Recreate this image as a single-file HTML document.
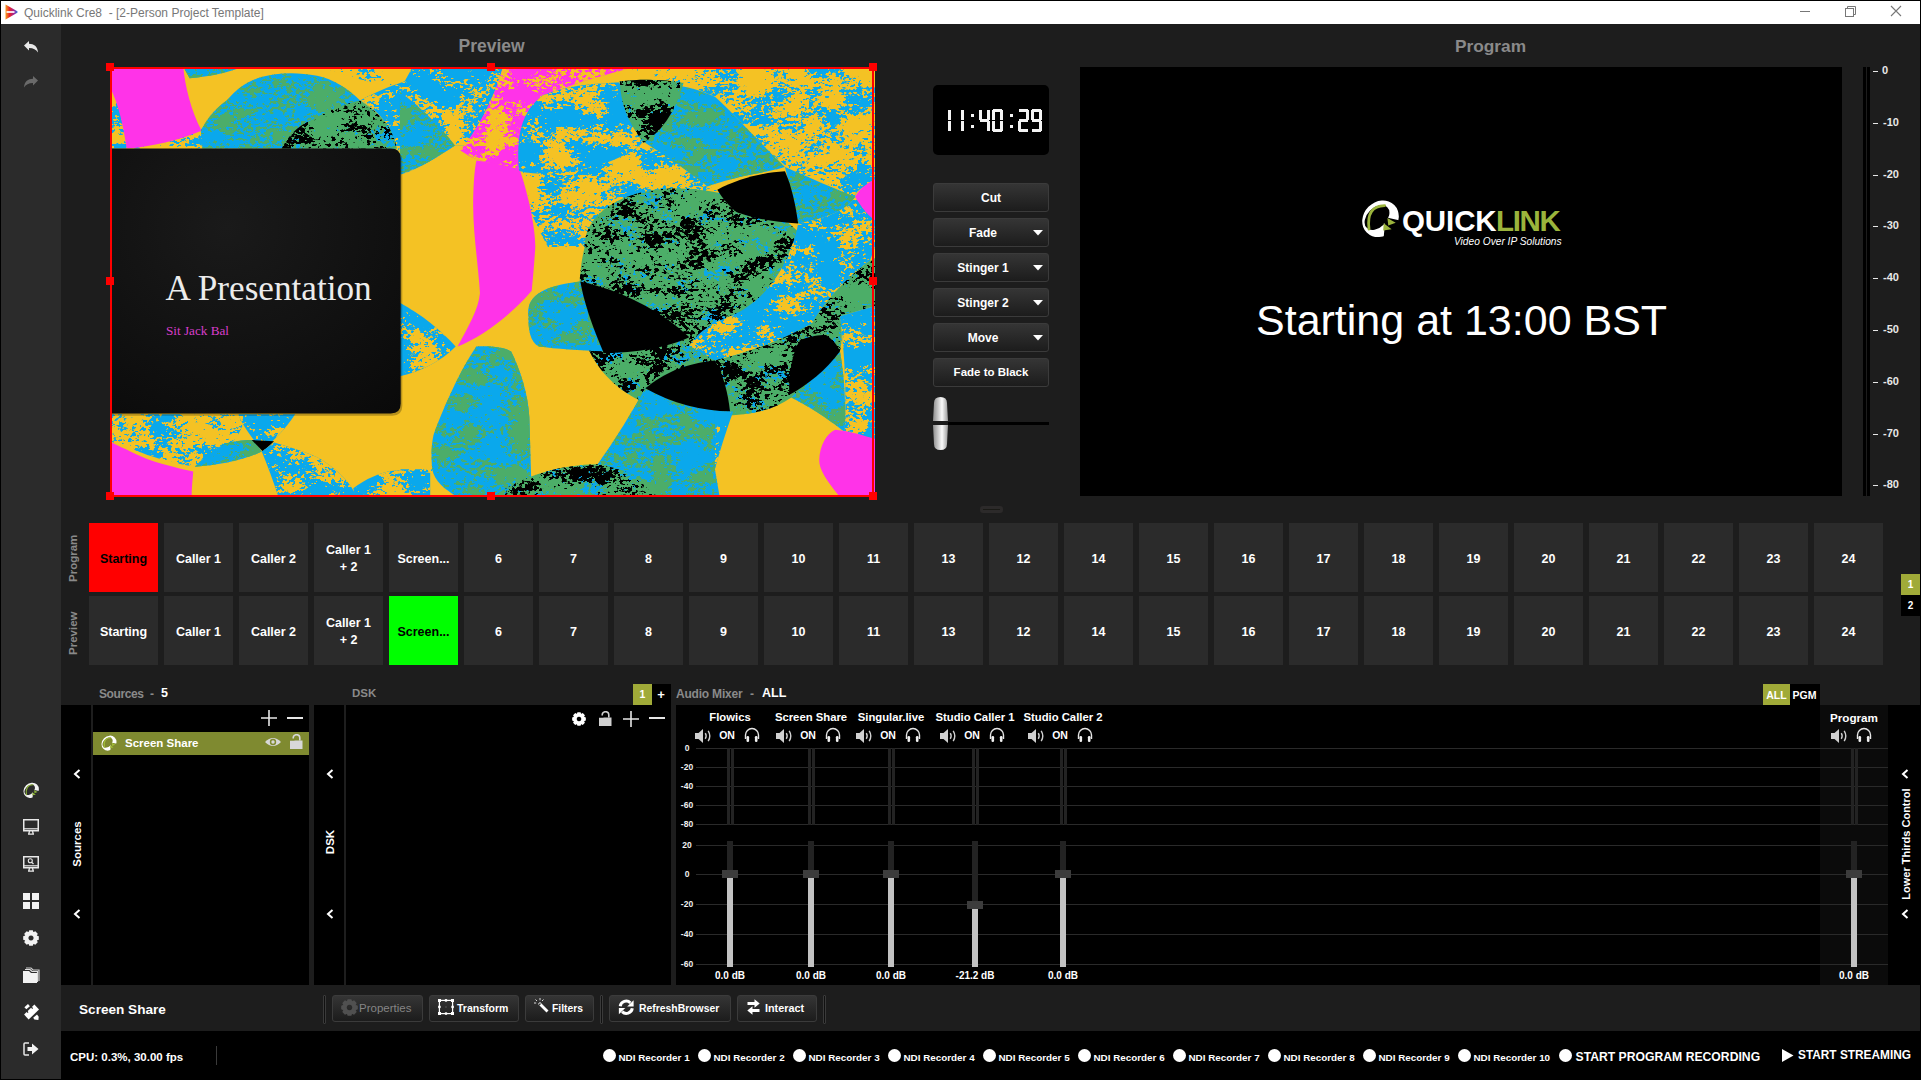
<!DOCTYPE html><html><head><meta charset="utf-8"><style>
html,body{margin:0;padding:0;width:1921px;height:1080px;overflow:hidden;background:#1d1d1d;font-family:"Liberation Sans", sans-serif;}
div{box-sizing:border-box;}
.btn{position:absolute;border:1px solid #3b3b3b;border-radius:3px;background:linear-gradient(#353535,#1c1c1c);}
.gb{position:absolute;width:69px;height:69px;padding-top:3px;background:#2b2b2b;display:flex;align-items:center;justify-content:center;text-align:center;color:#fff;font-weight:700;font-size:12.5px;line-height:17px;}
</style></head><body>
<div style="position:absolute;left:0px;top:0px;width:1921px;height:24px;background:#fff;border-top:1px solid #000;border-left:1px solid #000;border-right:1px solid #000;"></div>
<svg style="position:absolute;left:4px;top:4px" width="14" height="16" viewBox="0 0 14 16">
<defs><linearGradient id="tg" x1="0" x2="1" y1="0" y2="0"><stop offset="0" stop-color="#f7a21b"/><stop offset="0.35" stop-color="#e8222b"/><stop offset="0.7" stop-color="#a0239a"/><stop offset="1" stop-color="#2a7be0"/></linearGradient></defs>
<path d="M1.5 1 Q1 0.3 2 0.8 L13.3 7.3 Q14 8 13.3 8.7 L2 15.2 Q1 15.7 1.5 15 Z" fill="url(#tg)"/>
<rect x="2.5" y="7" width="8" height="2" fill="#fff" opacity="0.85"/></svg>
<div style="position:absolute;left:24px;top:7px;font-size:12px;color:#777;font-weight:400;white-space:nowrap;line-height:1;">Quicklink Cre8&nbsp; - [2-Person Project Template]</div>
<div style="position:absolute;left:1800px;top:11px;width:10px;height:1px;background:#777;"></div>
<svg style="position:absolute;left:1844px;top:5px" width="13" height="13" viewBox="0 0 13 13" fill="none" stroke="#777" stroke-width="1">
<rect x="1.5" y="3.5" width="8" height="8"/><path d="M3.5 3.5 V1.5 H11.5 V9.5 H9.5"/></svg>
<svg style="position:absolute;left:1890px;top:5px" width="12" height="12" viewBox="0 0 12 12" stroke="#777" stroke-width="1.1">
<path d="M1 1 L11 11 M11 1 L1 11"/></svg>
<div style="position:absolute;left:0px;top:24px;width:61px;height:1056px;background:#2b2b2b;"></div>
<svg style="position:absolute;left:23px;top:40px" width="16" height="14" viewBox="0 0 16 14">
<path d="M1 5.5 L6 1 V3.8 C11 3.8 14.5 6.5 15 12.5 C13 9.5 10.5 8 6 8 V10.5 Z" fill="#e8e8e8"/></svg>
<svg style="position:absolute;left:23px;top:75px" width="16" height="14" viewBox="0 0 16 14">
<path d="M15 5.5 L10 1 V3.8 C5 3.8 1.5 6.5 1 12.5 C3 9.5 5.5 8 10 8 V10.5 Z" fill="#6a6a6a"/></svg>
<div style="position:absolute;left:458.5px;top:38px;font-size:17.5px;color:#8a8a8a;font-weight:700;white-space:nowrap;line-height:1;">Preview</div>
<div style="position:absolute;left:1455px;top:38px;font-size:17.3px;color:#8a8a8a;font-weight:700;white-space:nowrap;line-height:1;">Program</div>
<div style="position:absolute;left:110px;top:67px;width:764px;height:430px;background:#f4c224;"></div>
<svg style="position:absolute;left:110px;top:67px" width="765" height="430" viewBox="0 0 1921 1080" preserveAspectRatio="none"><defs><filter id="fg" x="0" y="0" width="1" height="1" color-interpolation-filters="sRGB"><feTurbulence type="fractalNoise" baseFrequency="0.012 0.02" numOctaves="2" seed="11"/><feColorMatrix type="matrix" values="1 0 0 0 0  1 0 0 0 0  1 0 0 0 0  0 0 0 0 1" result="lo"/><feTurbulence type="fractalNoise" baseFrequency="0.09 0.14" numOctaves="4" seed="12"/><feColorMatrix type="matrix" values="1 0 0 0 0  1 0 0 0 0  1 0 0 0 0  0 0 0 0 1" result="hi"/><feComposite in="lo" in2="hi" operator="arithmetic" k1="0" k2="1.2" k3="1" k4="-0.6"/><feColorMatrix type="matrix" values="0 0 0 0 0.3  0 0 0 0 0.68  0 0 0 0 0.41  -16 0 0 0 8.2"/><feComposite in2="SourceAlpha" operator="in"/></filter><filter id="fk" x="0" y="0" width="1" height="1" color-interpolation-filters="sRGB"><feTurbulence type="fractalNoise" baseFrequency="0.012 0.02" numOctaves="2" seed="21"/><feColorMatrix type="matrix" values="1 0 0 0 0  1 0 0 0 0  1 0 0 0 0  0 0 0 0 1" result="lo"/><feTurbulence type="fractalNoise" baseFrequency="0.09 0.14" numOctaves="4" seed="22"/><feColorMatrix type="matrix" values="1 0 0 0 0  1 0 0 0 0  1 0 0 0 0  0 0 0 0 1" result="hi"/><feComposite in="lo" in2="hi" operator="arithmetic" k1="0" k2="1.2" k3="1" k4="-0.6"/><feColorMatrix type="matrix" values="0 0 0 0 0  0 0 0 0 0  0 0 0 0 0  -16 0 0 0 6.9"/><feComposite in2="SourceAlpha" operator="in"/></filter><filter id="fkb" x="0" y="0" width="1" height="1" color-interpolation-filters="sRGB"><feTurbulence type="fractalNoise" baseFrequency="0.012 0.02" numOctaves="2" seed="31"/><feColorMatrix type="matrix" values="1 0 0 0 0  1 0 0 0 0  1 0 0 0 0  0 0 0 0 1" result="lo"/><feTurbulence type="fractalNoise" baseFrequency="0.09 0.14" numOctaves="4" seed="32"/><feColorMatrix type="matrix" values="1 0 0 0 0  1 0 0 0 0  1 0 0 0 0  0 0 0 0 1" result="hi"/><feComposite in="lo" in2="hi" operator="arithmetic" k1="0" k2="1.2" k3="1" k4="-0.6"/><feColorMatrix type="matrix" values="0 0 0 0 0.04  0 0 0 0 0.66  0 0 0 0 0.92  -16 0 0 0 4.6"/><feComposite in2="SourceAlpha" operator="in"/></filter><filter id="fy" x="0" y="0" width="1" height="1" color-interpolation-filters="sRGB"><feTurbulence type="fractalNoise" baseFrequency="0.012 0.02" numOctaves="2" seed="41"/><feColorMatrix type="matrix" values="1 0 0 0 0  1 0 0 0 0  1 0 0 0 0  0 0 0 0 1" result="lo"/><feTurbulence type="fractalNoise" baseFrequency="0.09 0.14" numOctaves="4" seed="42"/><feColorMatrix type="matrix" values="1 0 0 0 0  1 0 0 0 0  1 0 0 0 0  0 0 0 0 1" result="hi"/><feComposite in="lo" in2="hi" operator="arithmetic" k1="0" k2="1.2" k3="1" k4="-0.6"/><feColorMatrix type="matrix" values="0 0 0 0 0.96  0 0 0 0 0.76  0 0 0 0 0.14  -16 0 0 0 6.9"/><feComposite in2="SourceAlpha" operator="in"/></filter><filter id="fb" x="0" y="0" width="1" height="1" color-interpolation-filters="sRGB"><feTurbulence type="fractalNoise" baseFrequency="0.012 0.02" numOctaves="2" seed="51"/><feColorMatrix type="matrix" values="1 0 0 0 0  1 0 0 0 0  1 0 0 0 0  0 0 0 0 1" result="lo"/><feTurbulence type="fractalNoise" baseFrequency="0.09 0.14" numOctaves="4" seed="52"/><feColorMatrix type="matrix" values="1 0 0 0 0  1 0 0 0 0  1 0 0 0 0  0 0 0 0 1" result="hi"/><feComposite in="lo" in2="hi" operator="arithmetic" k1="0" k2="1.2" k3="1" k4="-0.6"/><feColorMatrix type="matrix" values="0 0 0 0 0.04  0 0 0 0 0.66  0 0 0 0 0.92  -16 0 0 0 7.3"/><feComposite in2="SourceAlpha" operator="in"/></filter><filter id="fY" x="0" y="0" width="1" height="1" color-interpolation-filters="sRGB"><feTurbulence type="fractalNoise" baseFrequency="0.012 0.02" numOctaves="2" seed="61"/><feColorMatrix type="matrix" values="1 0 0 0 0  1 0 0 0 0  1 0 0 0 0  0 0 0 0 1" result="lo"/><feTurbulence type="fractalNoise" baseFrequency="0.09 0.14" numOctaves="4" seed="62"/><feColorMatrix type="matrix" values="1 0 0 0 0  1 0 0 0 0  1 0 0 0 0  0 0 0 0 1" result="hi"/><feComposite in="lo" in2="hi" operator="arithmetic" k1="0" k2="1.2" k3="1" k4="-0.6"/><feColorMatrix type="matrix" values="0 0 0 0 0.96  0 0 0 0 0.76  0 0 0 0 0.14  -16 0 0 0 7.8"/><feComposite in2="SourceAlpha" operator="in"/></filter><radialGradient id="pg" cx="0.4" cy="0.3" r="0.9"><stop offset="0" stop-color="#1a1a1a"/><stop offset="1" stop-color="#0a0a0a"/></radialGradient></defs><rect x="0" y="0" width="1921" height="1080" fill="#f4c224"/><path d="M1280,0 L1921,0 L1921,290 C1880,300 1870,320 1871,326 C1800,300 1740,280 1695,251 C1620,180 1560,110 1519,75 C1450,40 1350,20 1280,0 Z" fill="#f4c224"/><path d="M1280,0 L1921,0 L1921,290 C1880,300 1870,320 1871,326 C1800,300 1740,280 1695,251 C1620,180 1560,110 1519,75 C1450,40 1350,20 1280,0 Z" fill="#000" filter="url(#fb)"/><path d="M1029,260 C1100,230 1200,200 1300,197 C1400,200 1480,240 1523,300 L1531,452 L1100,452 C1060,380 1035,320 1029,260 Z" fill="#f4c224"/><path d="M1029,260 C1100,230 1200,200 1300,197 C1400,200 1480,240 1523,300 L1531,452 L1100,452 C1060,380 1035,320 1029,260 Z" fill="#000" filter="url(#fb)"/><path d="M536,0 L1000,0 L990,60 L740,60 C700,45 600,30 536,0 Z" fill="#f4c224"/><path d="M536,0 L1000,0 L990,60 L740,60 C700,45 600,30 536,0 Z" fill="#000" filter="url(#fb)"/><path d="M0,872 L340,872 C330,930 300,960 213,1004 C120,990 60,960 0,940 Z" fill="#f4c224"/><path d="M0,872 L340,872 C330,930 300,960 213,1004 C120,990 60,960 0,940 Z" fill="#000" filter="url(#fb)"/><path d="M0,54 L42,54 L42,205 L0,205 Z" fill="#f4c224"/><path d="M0,54 L42,54 L42,205 L0,205 Z" fill="#000" filter="url(#fb)"/><path d="M126,159 L240,159 L228,205 L60,205 Z" fill="#f4c224"/><path d="M126,159 L240,159 L228,205 L60,205 Z" fill="#000" filter="url(#fb)"/><path d="M728,1010 L809,1010 L815,1080 L728,1080 Z" fill="#f4c224"/><path d="M728,1010 L809,1010 L815,1080 L728,1080 Z" fill="#000" filter="url(#fb)"/><path d="M0,0 L184,0 C188,45 203,110 230,160 C175,183 105,200 42,205 C34,150 22,95 0,50 Z" fill="#ff33e8"/><path d="M184,0 L330,0 C300,14 250,24 200,28 Z" fill="#0aa8ec"/><path d="M184,0 L330,0 C300,14 250,24 200,28 Z" fill="#000" filter="url(#fg)"/><path d="M228,159 C250,120 270,100 293,84 C320,55 340,38 380,25 C420,14 470,12 520,22 C560,30 600,55 628,84 C680,120 710,170 720,205 L232,205 Z" fill="#0aa8ec"/><path d="M228,159 C250,120 270,100 293,84 C320,55 340,38 380,25 C420,14 470,12 520,22 C560,30 600,55 628,84 C680,120 710,170 720,205 L232,205 Z" fill="#000" filter="url(#fg)"/><path d="M628,84 C660,66 700,50 740,36 L760,0 L1000,0 C990,60 970,120 946,170 C920,190 890,200 866,197 C830,220 780,255 730,270 C728,240 725,220 720,205 C710,160 680,110 628,84 Z" fill="#0aa8ec"/><path d="M628,84 C660,66 700,50 740,36 L760,0 L1000,0 C990,60 970,120 946,170 C920,190 890,200 866,197 C830,220 780,255 730,270 C728,240 725,220 720,205 C710,160 680,110 628,84 Z" fill="#000" filter="url(#fy)"/><path d="M431,205 C450,170 470,150 502,135 C550,108 590,92 628,84 C660,105 690,130 705,160 C712,175 718,190 720,205 Z" fill="#4cae68"/><path d="M431,205 C450,170 470,150 502,135 C550,108 590,92 628,84 C660,105 690,130 705,160 C712,175 718,190 720,205 Z" fill="#000" filter="url(#fkb)"/><path d="M431,205 C450,170 470,150 502,135 C550,108 590,92 628,84 C660,105 690,130 705,160 C712,175 718,190 720,205 Z" fill="#000" filter="url(#fk)"/><path d="M728,63 C780,100 830,150 866,197 C830,220 780,255 728,268 Z" fill="#0aa8ec"/><path d="M728,63 C780,100 830,150 866,197 C830,220 780,255 728,268 Z" fill="#000" filter="url(#fg)"/><path d="M987,0 L1314,0 C1250,20 1150,40 1090,80 C1050,110 1035,150 1029,200 L1029,260 C990,250 940,240 904,225 L880,210 C920,160 960,90 987,0 Z" fill="#ff33e8"/><path d="M987,0 L1314,0 C1250,20 1150,40 1090,80 C1050,110 1035,150 1029,200 L1029,260 C990,250 940,240 904,225 L880,210 C920,160 960,90 987,0 Z" fill="#000" filter="url(#fY)"/><path d="M920,235 C960,240 1000,248 1029,258 C1050,320 1068,400 1068,452 C1065,500 1062,530 1059,562 C1000,630 930,680 873,702 C900,650 925,610 929,568 C925,500 912,420 912,350 C912,300 915,260 920,235 Z" fill="#ff33e8"/><path d="M1027,260 C1020,180 1030,110 1090,70 C1150,45 1220,40 1300,38 C1330,100 1340,160 1340,188 C1300,230 1200,262 1100,268 C1060,268 1035,265 1027,260 Z" fill="#0aa8ec"/><path d="M1027,260 C1020,180 1030,110 1090,70 C1150,45 1220,40 1300,38 C1330,100 1340,160 1340,188 C1300,230 1200,262 1100,268 C1060,268 1035,265 1027,260 Z" fill="#000" filter="url(#fy)"/><path d="M1356,42 C1420,40 1480,55 1519,75 C1560,110 1620,180 1695,251 C1680,256 1650,262 1620,268 C1560,280 1520,293 1500,300 C1450,260 1390,220 1340,188 C1350,140 1356,90 1356,42 Z" fill="#0aa8ec"/><path d="M1356,42 C1420,40 1480,55 1519,75 C1560,110 1620,180 1695,251 C1680,256 1650,262 1620,268 C1560,280 1520,293 1500,300 C1450,260 1390,220 1340,188 C1350,140 1356,90 1356,42 Z" fill="#000" filter="url(#fg)"/><path d="M1280,36 C1330,30 1390,30 1440,40 C1425,100 1390,160 1340,190 C1300,140 1282,90 1280,36 Z" fill="#4cae68"/><path d="M1280,36 C1330,30 1390,30 1440,40 C1425,100 1390,160 1340,190 C1300,140 1282,90 1280,36 Z" fill="#000" filter="url(#fkb)"/><path d="M1280,36 C1330,30 1390,30 1440,40 C1425,100 1390,160 1340,190 C1300,140 1282,90 1280,36 Z" fill="#000" filter="url(#fk)"/><path d="M1192,452 C1192,360 1300,305 1420,305 C1560,305 1700,360 1760,452 C1800,560 1780,700 1711,830 C1640,880 1540,880 1460,870 C1300,860 1200,760 1181,640 C1175,560 1180,500 1192,452 Z" fill="#4cae68"/><path d="M1192,452 C1192,360 1300,305 1420,305 C1560,305 1700,360 1760,452 C1800,560 1780,700 1711,830 C1640,880 1540,880 1460,870 C1300,860 1200,760 1181,640 C1175,560 1180,500 1192,452 Z" fill="#000" filter="url(#fkb)"/><path d="M1192,452 C1192,360 1300,305 1420,305 C1560,305 1700,360 1760,452 C1800,560 1780,700 1711,830 C1640,880 1540,880 1460,870 C1300,860 1200,760 1181,640 C1175,560 1180,500 1192,452 Z" fill="#000" filter="url(#fk)"/><path d="M1695,251 C1760,280 1820,305 1871,326 C1850,360 1800,380 1728,393 C1715,340 1705,290 1695,251 Z" fill="#0aa8ec"/><path d="M1695,251 C1760,280 1820,305 1871,326 C1850,360 1800,380 1728,393 C1715,340 1705,290 1695,251 Z" fill="#000" filter="url(#fg)"/><path d="M1728,393 C1800,380 1850,360 1871,326 L1921,290 L1921,452 L1908,487 C1860,520 1800,580 1763,644 C1700,680 1600,720 1519,737 L1455,700 C1480,660 1520,640 1560,625 C1620,600 1680,540 1711,452 C1720,430 1725,410 1728,393 Z" fill="#0aa8ec"/><path d="M1728,393 C1800,380 1850,360 1871,326 L1921,290 L1921,452 L1908,487 C1860,520 1800,580 1763,644 C1700,680 1600,720 1519,737 L1455,700 C1480,660 1520,640 1560,625 C1620,600 1680,540 1711,452 C1720,430 1725,410 1728,393 Z" fill="#000" filter="url(#fy)"/><path d="M1519,737 C1600,720 1700,680 1763,644 C1800,580 1860,520 1908,487 L1921,480 L1921,600 L1833,626 C1840,660 1838,690 1833,714 C1800,760 1750,800 1711,830 C1650,850 1600,860 1557,865 Z" fill="#4cae68"/><path d="M1519,737 C1600,720 1700,680 1763,644 C1800,580 1860,520 1908,487 L1921,480 L1921,600 L1833,626 C1840,660 1838,690 1833,714 C1800,760 1750,800 1711,830 C1650,850 1600,860 1557,865 Z" fill="#000" filter="url(#fkb)"/><path d="M1519,737 C1600,720 1700,680 1763,644 C1800,580 1860,520 1908,487 L1921,480 L1921,600 L1833,626 C1840,660 1838,690 1833,714 C1800,760 1750,800 1711,830 C1650,850 1600,860 1557,865 Z" fill="#000" filter="url(#fk)"/><path d="M1833,626 L1921,600 L1921,935 L1845,917 C1850,820 1845,720 1833,626 Z" fill="#0aa8ec"/><path d="M1833,626 L1921,600 L1921,935 L1845,917 C1850,820 1845,720 1833,626 Z" fill="#000" filter="url(#fy)"/><path d="M1711,830 C1760,780 1800,750 1833,714 C1845,780 1848,850 1845,917 C1800,880 1750,850 1711,830 Z" fill="#0aa8ec"/><path d="M1711,830 C1760,780 1800,750 1833,714 C1845,780 1848,850 1845,917 C1800,880 1750,850 1711,830 Z" fill="#000" filter="url(#fg)"/><path d="M1525,308 C1580,280 1640,265 1695,262 C1712,300 1722,350 1728,393 C1660,390 1600,375 1573,364 C1550,345 1535,325 1525,308 Z" fill="#000"/><path d="M1871,326 C1880,310 1895,295 1921,282 L1921,385 C1900,370 1885,350 1871,326 Z" fill="#ff33e8"/><path d="M1051,626 C1045,580 1080,550 1181,539 C1210,600 1225,660 1240,714 C1180,712 1120,708 1077,702 C1055,690 1050,660 1051,626 Z" fill="#0aa8ec"/><path d="M1051,626 C1045,580 1080,550 1181,539 C1210,600 1225,660 1240,714 C1180,712 1120,708 1077,702 C1055,690 1050,660 1051,626 Z" fill="#000" filter="url(#fg)"/><path d="M1181,539 C1280,560 1380,610 1455,679 C1400,705 1320,718 1240,719 C1210,650 1190,590 1181,539 Z" fill="#000"/><path d="M728,592 C780,620 830,660 868,702 C830,740 780,765 728,777 Z" fill="#0aa8ec"/><path d="M728,592 C780,620 830,660 868,702 C830,740 780,765 728,777 Z" fill="#000" filter="url(#fy)"/><path d="M920,702 C960,700 990,705 1007,714 C1030,760 1050,820 1053,880 L1059,1080 L873,1080 C840,1060 815,1040 809,1010 C805,960 810,930 815,917 C840,850 880,760 920,702 Z" fill="#0aa8ec"/><path d="M920,702 C960,700 990,705 1007,714 C1030,760 1050,820 1053,880 L1059,1080 L873,1080 C840,1060 815,1040 809,1010 C805,960 810,930 815,917 C840,850 880,760 920,702 Z" fill="#000" filter="url(#fg)"/><path d="M1344,807 C1400,780 1470,760 1519,737 L1557,865 C1540,900 1525,950 1519,1010 L1531,1080 L1180,1080 C1200,1040 1215,1010 1228,993 C1280,920 1320,850 1344,807 Z" fill="#0aa8ec"/><path d="M1344,807 C1400,780 1470,760 1519,737 L1557,865 C1540,900 1525,950 1519,1010 L1531,1080 L1180,1080 C1200,1040 1215,1010 1228,993 C1280,920 1320,850 1344,807 Z" fill="#000" filter="url(#fg)"/><path d="M1344,807 C1390,770 1440,745 1519,737 C1540,770 1552,820 1557,865 C1490,865 1410,845 1344,807 Z" fill="#000"/><path d="M1705,824 C1705,760 1715,710 1734,685 C1760,675 1790,672 1798,673 C1815,685 1828,700 1833,714 C1800,760 1750,800 1705,824 Z" fill="#000"/><path d="M1519,865 L1565,865 C1545,920 1530,970 1519,1010 Z" fill="#0aa8ec"/><path d="M1519,865 L1565,865 C1545,920 1530,970 1519,1010 Z" fill="#000" filter="url(#fy)"/><path d="M961,1080 C1030,1030 1120,1000 1222,998 C1300,1010 1360,1040 1391,1080 Z" fill="#4cae68"/><path d="M961,1080 C1030,1030 1120,1000 1222,998 C1300,1010 1360,1040 1391,1080 Z" fill="#000" filter="url(#fkb)"/><path d="M961,1080 C1030,1030 1120,1000 1222,998 C1300,1010 1360,1040 1391,1080 Z" fill="#000" filter="url(#fk)"/><path d="M1821,911 C1860,915 1890,925 1921,934 L1921,1080 L1833,1080 C1800,1040 1780,1010 1781,987 C1782,950 1800,920 1821,911 Z" fill="#ff33e8"/><path d="M322,872 L465,872 C440,910 410,940 381,962 C360,935 335,905 322,872 Z" fill="#0aa8ec"/><path d="M322,872 L465,872 C440,910 410,940 381,962 C360,935 335,905 322,872 Z" fill="#000" filter="url(#fy)"/><path d="M213,1004 C240,975 270,955 293,945 C320,938 345,936 360,937 L381,966 C330,990 270,1000 213,1004 Z" fill="#0aa8ec"/><path d="M213,1004 C240,975 270,955 293,945 C320,938 345,936 360,937 L381,966 C330,990 270,1000 213,1004 Z" fill="#000" filter="url(#fg)"/><path d="M356,937 L412,940 L384,966 Z" fill="#000"/><path d="M412,943 C470,960 520,975 544,995 C580,1020 605,1045 619,1080 L423,1080 C410,1040 395,1000 381,966 Z" fill="#0aa8ec"/><path d="M412,943 C470,960 520,975 544,995 C580,1020 605,1045 619,1080 L423,1080 C410,1040 395,1000 381,966 Z" fill="#000" filter="url(#fy)"/><path d="M611,1058 C640,1035 680,1018 711,1014 C750,1012 780,1015 804,1020 L804,1080 L615,1080 Z" fill="#0aa8ec"/><path d="M611,1058 C640,1035 680,1018 711,1014 C750,1012 780,1015 804,1020 L804,1080 L615,1080 Z" fill="#000" filter="url(#fy)"/><path d="M0,941 C40,960 70,975 100,987 C140,1000 180,1010 209,1016 C207,1040 205,1060 205,1080 L0,1080 Z" fill="#ff33e8"/><path d="M0,205 H705 Q730,205 730,230 V845 Q730,870 705,870 H0 Z" fill="#000" opacity="0.25" transform="translate(4,6)"/><path d="M0,205 H705 Q730,205 730,230 V845 Q730,870 705,870 H0 Z" fill="url(#pg)"/></svg>
<div style="position:absolute;left:165.5px;top:270.5px;font-size:35.2px;color:#ececec;font-weight:400;white-space:nowrap;line-height:1;font-family:Liberation Serif,serif;">A Presentation</div>
<div style="position:absolute;left:166px;top:324px;font-size:13.2px;color:#d83ecb;font-weight:400;white-space:nowrap;line-height:1;font-family:Liberation Serif,serif;">Sit Jack Bal</div>
<div style="position:absolute;left:110px;top:67px;width:764px;height:430px;border:2px solid #ff0000;"></div>
<div style="position:absolute;left:106px;top:63px;width:8px;height:8px;background:#ff0000;"></div>
<div style="position:absolute;left:106px;top:277px;width:8px;height:8px;background:#ff0000;"></div>
<div style="position:absolute;left:106px;top:492px;width:8px;height:8px;background:#ff0000;"></div>
<div style="position:absolute;left:487px;top:63px;width:8px;height:8px;background:#ff0000;"></div>
<div style="position:absolute;left:487px;top:492px;width:8px;height:8px;background:#ff0000;"></div>
<div style="position:absolute;left:869px;top:63px;width:8px;height:8px;background:#ff0000;"></div>
<div style="position:absolute;left:869px;top:277px;width:8px;height:8px;background:#ff0000;"></div>
<div style="position:absolute;left:869px;top:492px;width:8px;height:8px;background:#ff0000;"></div>
<div style="position:absolute;left:933px;top:85px;width:116px;height:70px;background:#000;border-radius:5px;"></div>
<svg style="position:absolute;left:0;top:0;overflow:visible" width="1" height="1"><rect x="948" y="110" width="3" height="10" fill="#f4f4f4"/><rect x="948" y="121" width="3" height="10" fill="#f4f4f4"/><rect x="961" y="110" width="3" height="10" fill="#f4f4f4"/><rect x="961" y="121" width="3" height="10" fill="#f4f4f4"/><rect x="979" y="110" width="3" height="10" fill="#f4f4f4"/><rect x="980" y="119" width="9" height="3" fill="#f4f4f4"/><rect x="987" y="110" width="3" height="10" fill="#f4f4f4"/><rect x="987" y="121" width="3" height="10" fill="#f4f4f4"/><rect x="993" y="109" width="9" height="3" fill="#f4f4f4"/><rect x="1000" y="110" width="3" height="10" fill="#f4f4f4"/><rect x="1000" y="121" width="3" height="10" fill="#f4f4f4"/><rect x="993" y="129" width="9" height="3" fill="#f4f4f4"/><rect x="992" y="121" width="3" height="10" fill="#f4f4f4"/><rect x="992" y="110" width="3" height="10" fill="#f4f4f4"/><rect x="1019" y="109" width="9" height="3" fill="#f4f4f4"/><rect x="1026" y="110" width="3" height="10" fill="#f4f4f4"/><rect x="1019" y="119" width="9" height="3" fill="#f4f4f4"/><rect x="1018" y="121" width="3" height="10" fill="#f4f4f4"/><rect x="1019" y="129" width="9" height="3" fill="#f4f4f4"/><rect x="1032" y="109" width="9" height="3" fill="#f4f4f4"/><rect x="1039" y="110" width="3" height="10" fill="#f4f4f4"/><rect x="1039" y="121" width="3" height="10" fill="#f4f4f4"/><rect x="1032" y="129" width="9" height="3" fill="#f4f4f4"/><rect x="1031" y="110" width="3" height="10" fill="#f4f4f4"/><rect x="1032" y="119" width="9" height="3" fill="#f4f4f4"/><rect x="971" y="114" width="3" height="3" fill="#f4f4f4"/><rect x="971" y="125" width="3" height="3" fill="#f4f4f4"/><rect x="1010" y="114" width="3" height="3" fill="#f4f4f4"/><rect x="1010" y="125" width="3" height="3" fill="#f4f4f4"/></svg>
<div class="btn" style="left:933px;top:183px;width:116px;height:29px;"></div>
<div style="position:absolute;left:791px;top:177.5px;width:400px;height:40px;display:flex;align-items:center;justify-content:center;font-size:12px;color:#fff;font-weight:700;white-space:nowrap;line-height:1;">Cut</div>
<div class="btn" style="left:933px;top:218px;width:116px;height:29px;"></div>
<div style="position:absolute;left:783px;top:212.5px;width:400px;height:40px;display:flex;align-items:center;justify-content:center;font-size:12px;color:#fff;font-weight:700;white-space:nowrap;line-height:1;">Fade</div>
<svg style="position:absolute;left:1033px;top:230px" width="10" height="6" viewBox="0 0 10 6"><path d="M0 0 H10 L5 5.5 Z" fill="#fff"/></svg>
<div class="btn" style="left:933px;top:253px;width:116px;height:29px;"></div>
<div style="position:absolute;left:783px;top:247.5px;width:400px;height:40px;display:flex;align-items:center;justify-content:center;font-size:12px;color:#fff;font-weight:700;white-space:nowrap;line-height:1;">Stinger 1</div>
<svg style="position:absolute;left:1033px;top:265px" width="10" height="6" viewBox="0 0 10 6"><path d="M0 0 H10 L5 5.5 Z" fill="#fff"/></svg>
<div class="btn" style="left:933px;top:288px;width:116px;height:29px;"></div>
<div style="position:absolute;left:783px;top:282.5px;width:400px;height:40px;display:flex;align-items:center;justify-content:center;font-size:12px;color:#fff;font-weight:700;white-space:nowrap;line-height:1;">Stinger 2</div>
<svg style="position:absolute;left:1033px;top:300px" width="10" height="6" viewBox="0 0 10 6"><path d="M0 0 H10 L5 5.5 Z" fill="#fff"/></svg>
<div class="btn" style="left:933px;top:323px;width:116px;height:29px;"></div>
<div style="position:absolute;left:783px;top:317.5px;width:400px;height:40px;display:flex;align-items:center;justify-content:center;font-size:12px;color:#fff;font-weight:700;white-space:nowrap;line-height:1;">Move</div>
<svg style="position:absolute;left:1033px;top:335px" width="10" height="6" viewBox="0 0 10 6"><path d="M0 0 H10 L5 5.5 Z" fill="#fff"/></svg>
<div class="btn" style="left:933px;top:358px;width:116px;height:29px;"></div>
<div style="position:absolute;left:791px;top:352.5px;width:400px;height:40px;display:flex;align-items:center;justify-content:center;font-size:11.5px;color:#fff;font-weight:700;white-space:nowrap;line-height:1;">Fade to Black</div>
<div style="position:absolute;left:933px;top:422px;width:116px;height:3px;background:#000;"></div>
<svg style="position:absolute;left:932px;top:396px" width="17" height="56" viewBox="0 0 17 56">
<defs><linearGradient id="tb" x1="0" x2="1"><stop offset="0" stop-color="#8c8c8c"/><stop offset="0.6" stop-color="#fafafa"/><stop offset="1" stop-color="#9a9a9a"/></linearGradient></defs>
<path d="M2 7 Q2 1 8.5 1 Q15 1 15 7 L16 25 H1 Z" fill="url(#tb)"/>
<path d="M1 29 H16 L15 48 Q15 54 8.5 54 Q2 54 2 48 Z" fill="url(#tb)"/>
<rect x="1" y="25" width="15" height="4" fill="#1a1a1a"/></svg>
<div style="position:absolute;left:980px;top:506px;width:23px;height:7px;background:#2c2a2a;border-radius:3px;"></div>
<div style="position:absolute;left:983px;top:509px;width:17px;height:1px;background:#1a1a16;"></div>
<div style="position:absolute;left:1080px;top:67px;width:762px;height:429px;background:#000;"></div>
<svg style="position:absolute;left:1361px;top:199px" width="39" height="39" viewBox="6 4 39 39">
<defs><clipPath id="qc1"><polygon points="0,0 50,0 50,26.7 30.5,22.2 28,50 0,50"/></clipPath></defs>
<path clip-path="url(#qc1)" fill-rule="evenodd" fill="#fff" d="M39.29,10.01 A19.5,17 -45 1,1 11.71,37.59 A19.5,17 -45 1,1 39.29,10.01 Z M32.25,12.25 A14.5,9.5 -45 1,0 11.75,32.75 A14.5,9.5 -45 1,0 32.25,12.25 Z"/>
<path d="M29.6,10.6 Q11,11 14,34" fill="none" stroke="#9bb43c" stroke-width="2.8" stroke-linecap="round"/>
<path d="M32.4,23.1 L40.7,27.8 L33.3,30.6 Z M28.7,28.2 L36.6,34.3 L28.2,35.6 Z" fill="#9bb43c"/>
</svg>
<div style="position:absolute;left:1402px;top:206px;font-size:29.5px;color:#fff;font-weight:700;white-space:nowrap;line-height:1;letter-spacing:-0.1px;">QUICK</div>
<div style="position:absolute;left:1496px;top:206px;font-size:29.5px;color:#9bb43c;font-weight:700;white-space:nowrap;line-height:1;letter-spacing:-1.3px;">LINK</div>
<div style="position:absolute;left:1454px;top:237px;font-size:10.2px;color:#fff;font-weight:400;white-space:nowrap;line-height:1;font-style:italic;letter-spacing:0px;">Video Over IP Solutions</div>
<div style="position:absolute;left:1256px;top:299px;font-size:43px;color:#fff;font-weight:400;white-space:nowrap;line-height:1;">Starting at 13:00 BST</div>
<div style="position:absolute;left:1863px;top:67px;width:3px;height:429px;background:#000;"></div>
<div style="position:absolute;left:1867px;top:67px;width:3px;height:429px;background:#000;"></div>
<div style="position:absolute;left:1873px;top:70.5px;width:5px;height:1.5px;background:#e8e8e8;"></div>
<div style="position:absolute;left:1882px;top:65px;font-size:11px;color:#e8e8e8;font-weight:700;white-space:nowrap;line-height:1;">0</div>
<div style="position:absolute;left:1873px;top:122.5px;width:5px;height:1.5px;background:#e8e8e8;"></div>
<div style="position:absolute;left:1883px;top:117px;font-size:11px;color:#e8e8e8;font-weight:700;white-space:nowrap;line-height:1;">-10</div>
<div style="position:absolute;left:1873px;top:174.5px;width:5px;height:1.5px;background:#e8e8e8;"></div>
<div style="position:absolute;left:1883px;top:169px;font-size:11px;color:#e8e8e8;font-weight:700;white-space:nowrap;line-height:1;">-20</div>
<div style="position:absolute;left:1873px;top:225.5px;width:5px;height:1.5px;background:#e8e8e8;"></div>
<div style="position:absolute;left:1883px;top:220px;font-size:11px;color:#e8e8e8;font-weight:700;white-space:nowrap;line-height:1;">-30</div>
<div style="position:absolute;left:1873px;top:277.5px;width:5px;height:1.5px;background:#e8e8e8;"></div>
<div style="position:absolute;left:1883px;top:272px;font-size:11px;color:#e8e8e8;font-weight:700;white-space:nowrap;line-height:1;">-40</div>
<div style="position:absolute;left:1873px;top:329.5px;width:5px;height:1.5px;background:#e8e8e8;"></div>
<div style="position:absolute;left:1883px;top:324px;font-size:11px;color:#e8e8e8;font-weight:700;white-space:nowrap;line-height:1;">-50</div>
<div style="position:absolute;left:1873px;top:381.5px;width:5px;height:1.5px;background:#e8e8e8;"></div>
<div style="position:absolute;left:1883px;top:376px;font-size:11px;color:#e8e8e8;font-weight:700;white-space:nowrap;line-height:1;">-60</div>
<div style="position:absolute;left:1873px;top:433.5px;width:5px;height:1.5px;background:#e8e8e8;"></div>
<div style="position:absolute;left:1883px;top:428px;font-size:11px;color:#e8e8e8;font-weight:700;white-space:nowrap;line-height:1;">-70</div>
<div style="position:absolute;left:1873px;top:484.5px;width:5px;height:1.5px;background:#e8e8e8;"></div>
<div style="position:absolute;left:1883px;top:479px;font-size:11px;color:#e8e8e8;font-weight:700;white-space:nowrap;line-height:1;">-80</div>
<div style="position:absolute;left:67.5px;top:582px;font-size:11.5px;color:#8a8a8a;font-weight:700;white-space:nowrap;line-height:1;transform:rotate(-90deg);transform-origin:0 0;">Program</div>
<div style="position:absolute;left:67.5px;top:655px;font-size:11.5px;color:#8a8a8a;font-weight:700;white-space:nowrap;line-height:1;transform:rotate(-90deg);transform-origin:0 0;">Preview</div>
<div class="gb" style="left:89px;top:523px;background:#ff0000;color:#000;">Starting</div>
<div class="gb" style="left:164px;top:523px;">Caller 1</div>
<div class="gb" style="left:239px;top:523px;">Caller 2</div>
<div class="gb" style="left:314px;top:523px;">Caller 1<br>+ 2</div>
<div class="gb" style="left:389px;top:523px;">Screen...</div>
<div class="gb" style="left:464px;top:523px;">6</div>
<div class="gb" style="left:539px;top:523px;">7</div>
<div class="gb" style="left:614px;top:523px;">8</div>
<div class="gb" style="left:689px;top:523px;">9</div>
<div class="gb" style="left:764px;top:523px;">10</div>
<div class="gb" style="left:839px;top:523px;">11</div>
<div class="gb" style="left:914px;top:523px;">13</div>
<div class="gb" style="left:989px;top:523px;">12</div>
<div class="gb" style="left:1064px;top:523px;">14</div>
<div class="gb" style="left:1139px;top:523px;">15</div>
<div class="gb" style="left:1214px;top:523px;">16</div>
<div class="gb" style="left:1289px;top:523px;">17</div>
<div class="gb" style="left:1364px;top:523px;">18</div>
<div class="gb" style="left:1439px;top:523px;">19</div>
<div class="gb" style="left:1514px;top:523px;">20</div>
<div class="gb" style="left:1589px;top:523px;">21</div>
<div class="gb" style="left:1664px;top:523px;">22</div>
<div class="gb" style="left:1739px;top:523px;">23</div>
<div class="gb" style="left:1814px;top:523px;">24</div>
<div class="gb" style="left:89px;top:596px;">Starting</div>
<div class="gb" style="left:164px;top:596px;">Caller 1</div>
<div class="gb" style="left:239px;top:596px;">Caller 2</div>
<div class="gb" style="left:314px;top:596px;">Caller 1<br>+ 2</div>
<div class="gb" style="left:389px;top:596px;background:#00ff00;color:#000;">Screen...</div>
<div class="gb" style="left:464px;top:596px;">6</div>
<div class="gb" style="left:539px;top:596px;">7</div>
<div class="gb" style="left:614px;top:596px;">8</div>
<div class="gb" style="left:689px;top:596px;">9</div>
<div class="gb" style="left:764px;top:596px;">10</div>
<div class="gb" style="left:839px;top:596px;">11</div>
<div class="gb" style="left:914px;top:596px;">13</div>
<div class="gb" style="left:989px;top:596px;">12</div>
<div class="gb" style="left:1064px;top:596px;">14</div>
<div class="gb" style="left:1139px;top:596px;">15</div>
<div class="gb" style="left:1214px;top:596px;">16</div>
<div class="gb" style="left:1289px;top:596px;">17</div>
<div class="gb" style="left:1364px;top:596px;">18</div>
<div class="gb" style="left:1439px;top:596px;">19</div>
<div class="gb" style="left:1514px;top:596px;">20</div>
<div class="gb" style="left:1589px;top:596px;">21</div>
<div class="gb" style="left:1664px;top:596px;">22</div>
<div class="gb" style="left:1739px;top:596px;">23</div>
<div class="gb" style="left:1814px;top:596px;">24</div>
<div style="position:absolute;left:1901px;top:574px;width:19px;height:21px;background:#a0aa38;"></div>
<div style="position:absolute;left:1710.5px;top:564.5px;width:400px;height:40px;display:flex;align-items:center;justify-content:center;font-size:10px;color:#fff;font-weight:700;white-space:nowrap;line-height:1;">1</div>
<div style="position:absolute;left:1901px;top:595px;width:19px;height:21px;background:#000;"></div>
<div style="position:absolute;left:1710.5px;top:585.5px;width:400px;height:40px;display:flex;align-items:center;justify-content:center;font-size:10px;color:#fff;font-weight:700;white-space:nowrap;line-height:1;">2</div>
<div style="position:absolute;left:99px;top:687.5px;font-size:12px;color:#8a8a8a;font-weight:700;white-space:nowrap;line-height:1;letter-spacing:-0.4px;">Sources</div>
<div style="position:absolute;left:150px;top:687.5px;font-size:12px;color:#8a8a8a;font-weight:700;white-space:nowrap;line-height:1;">-</div>
<div style="position:absolute;left:161px;top:687px;font-size:12.5px;color:#fff;font-weight:700;white-space:nowrap;line-height:1;">5</div>
<div style="position:absolute;left:352px;top:687.5px;font-size:11.5px;color:#8a8a8a;font-weight:700;white-space:nowrap;line-height:1;">DSK</div>
<div style="position:absolute;left:633px;top:684px;width:19px;height:21px;background:#a0aa38;"></div>
<div style="position:absolute;left:442.5px;top:674.5px;width:400px;height:40px;display:flex;align-items:center;justify-content:center;font-size:10.5px;color:#fff;font-weight:700;white-space:nowrap;line-height:1;">1</div>
<div style="position:absolute;left:652px;top:684px;width:19px;height:21px;background:#000;"></div>
<div style="position:absolute;left:461px;top:674.5px;width:400px;height:40px;display:flex;align-items:center;justify-content:center;font-size:13px;color:#fff;font-weight:700;white-space:nowrap;line-height:1;">+</div>
<div style="position:absolute;left:676px;top:687.5px;font-size:12px;color:#8a8a8a;font-weight:700;white-space:nowrap;line-height:1;letter-spacing:-0.2px;">Audio Mixer</div>
<div style="position:absolute;left:750px;top:687.5px;font-size:12px;color:#8a8a8a;font-weight:700;white-space:nowrap;line-height:1;">-</div>
<div style="position:absolute;left:762px;top:687px;font-size:12.5px;color:#fff;font-weight:700;white-space:nowrap;line-height:1;">ALL</div>
<div style="position:absolute;left:1763px;top:684px;width:27px;height:21px;background:#a0aa38;"></div>
<div style="position:absolute;left:1576.5px;top:675px;width:400px;height:40px;display:flex;align-items:center;justify-content:center;font-size:10.5px;color:#fff;font-weight:700;white-space:nowrap;line-height:1;">ALL</div>
<div style="position:absolute;left:1790px;top:684px;width:30px;height:21px;background:#000;"></div>
<div style="position:absolute;left:1604.5px;top:675px;width:400px;height:40px;display:flex;align-items:center;justify-content:center;font-size:10.5px;color:#fff;font-weight:700;white-space:nowrap;line-height:1;">PGM</div>
<div style="position:absolute;left:61px;top:705px;width:30px;height:280px;background:#000;"></div>
<div style="position:absolute;left:91px;top:705px;width:2px;height:280px;background:#1e1e1e;"></div>
<div style="position:absolute;left:93px;top:705px;width:216px;height:280px;background:#000;"></div>
<div style="position:absolute;left:314px;top:705px;width:30px;height:280px;background:#000;"></div>
<div style="position:absolute;left:344px;top:705px;width:2px;height:280px;background:#1e1e1e;"></div>
<div style="position:absolute;left:346px;top:705px;width:325px;height:280px;background:#000;"></div>
<div style="position:absolute;left:676px;top:705px;width:1244px;height:280px;background:#000;"></div>
<div style="position:absolute;left:1820px;top:705px;width:68px;height:280px;background:#0b0b0b;"></div>
<svg style="position:absolute;left:73px;top:769px" width="8" height="10" viewBox="0 0 8 10"><path d="M6.5 1 L2 5 L6.5 9" fill="none" stroke="#fff" stroke-width="2"/></svg>
<svg style="position:absolute;left:73px;top:909px" width="8" height="10" viewBox="0 0 8 10"><path d="M6.5 1 L2 5 L6.5 9" fill="none" stroke="#fff" stroke-width="2"/></svg>
<svg style="position:absolute;left:326px;top:769px" width="8" height="10" viewBox="0 0 8 10"><path d="M6.5 1 L2 5 L6.5 9" fill="none" stroke="#fff" stroke-width="2"/></svg>
<svg style="position:absolute;left:326px;top:909px" width="8" height="10" viewBox="0 0 8 10"><path d="M6.5 1 L2 5 L6.5 9" fill="none" stroke="#fff" stroke-width="2"/></svg>
<svg style="position:absolute;left:1901px;top:769px" width="8" height="10" viewBox="0 0 8 10"><path d="M6.5 1 L2 5 L6.5 9" fill="none" stroke="#fff" stroke-width="2"/></svg>
<svg style="position:absolute;left:1901px;top:909px" width="8" height="10" viewBox="0 0 8 10"><path d="M6.5 1 L2 5 L6.5 9" fill="none" stroke="#fff" stroke-width="2"/></svg>
<div style="position:absolute;left:-22.5px;top:833.5px;width:200px;height:20px;display:flex;align-items:center;justify-content:center;font-size:11.5px;color:#fff;font-weight:700;white-space:nowrap;line-height:1;transform:rotate(-90deg);">Sources</div>
<div style="position:absolute;left:230.5px;top:831.5px;width:200px;height:20px;display:flex;align-items:center;justify-content:center;font-size:11.5px;color:#fff;font-weight:700;white-space:nowrap;line-height:1;transform:rotate(-90deg);">DSK</div>
<div style="position:absolute;left:1805.5px;top:833.5px;width:200px;height:20px;display:flex;align-items:center;justify-content:center;font-size:11px;color:#fff;font-weight:700;white-space:nowrap;line-height:1;transform:rotate(-90deg);">Lower Thirds Control</div>
<svg style="position:absolute;left:261px;top:710px" width="16" height="16" viewBox="0 0 16 16"><path d="M8 0 V16 M0 8 H16" stroke="#e6e6e6" stroke-width="1.6"/></svg>
<div style="position:absolute;left:287px;top:717px;width:16px;height:2px;background:#e6e6e6;"></div>
<div style="position:absolute;left:93px;top:732px;width:216px;height:23px;background:#7f8a30;"></div>
<div style="position:absolute;left:125px;top:738px;font-size:11.5px;color:#fff;font-weight:700;white-space:nowrap;line-height:1;">Screen Share</div>
<svg style="position:absolute;left:623px;top:711px" width="16" height="16" viewBox="0 0 16 16"><path d="M8 0 V16 M0 8 H16" stroke="#e6e6e6" stroke-width="1.6"/></svg>
<div style="position:absolute;left:649px;top:717px;width:16px;height:2px;background:#e6e6e6;"></div>
<div style="position:absolute;left:696px;top:748px;width:1192px;height:1px;background:#2a2a2a;"></div>
<div style="position:absolute;left:667px;top:743px;width:40px;text-align:center;font-size:8.5px;font-weight:700;color:#f0f0f0;line-height:10px;">0</div>
<div style="position:absolute;left:696px;top:767px;width:1192px;height:1px;background:#2a2a2a;"></div>
<div style="position:absolute;left:667px;top:762px;width:40px;text-align:center;font-size:8.5px;font-weight:700;color:#f0f0f0;line-height:10px;">-20</div>
<div style="position:absolute;left:696px;top:786px;width:1192px;height:1px;background:#2a2a2a;"></div>
<div style="position:absolute;left:667px;top:781px;width:40px;text-align:center;font-size:8.5px;font-weight:700;color:#f0f0f0;line-height:10px;">-40</div>
<div style="position:absolute;left:696px;top:805px;width:1192px;height:1px;background:#2a2a2a;"></div>
<div style="position:absolute;left:667px;top:800px;width:40px;text-align:center;font-size:8.5px;font-weight:700;color:#f0f0f0;line-height:10px;">-60</div>
<div style="position:absolute;left:696px;top:824px;width:1192px;height:1px;background:#2a2a2a;"></div>
<div style="position:absolute;left:667px;top:819px;width:40px;text-align:center;font-size:8.5px;font-weight:700;color:#f0f0f0;line-height:10px;">-80</div>
<div style="position:absolute;left:696px;top:845px;width:1192px;height:1px;background:#2a2a2a;"></div>
<div style="position:absolute;left:667px;top:840px;width:40px;text-align:center;font-size:8.5px;font-weight:700;color:#f0f0f0;line-height:10px;">20</div>
<div style="position:absolute;left:696px;top:874px;width:1192px;height:1px;background:#2a2a2a;"></div>
<div style="position:absolute;left:667px;top:869px;width:40px;text-align:center;font-size:8.5px;font-weight:700;color:#f0f0f0;line-height:10px;">0</div>
<div style="position:absolute;left:696px;top:904px;width:1192px;height:1px;background:#2a2a2a;"></div>
<div style="position:absolute;left:667px;top:899px;width:40px;text-align:center;font-size:8.5px;font-weight:700;color:#f0f0f0;line-height:10px;">-20</div>
<div style="position:absolute;left:696px;top:934px;width:1192px;height:1px;background:#2a2a2a;"></div>
<div style="position:absolute;left:667px;top:929px;width:40px;text-align:center;font-size:8.5px;font-weight:700;color:#f0f0f0;line-height:10px;">-40</div>
<div style="position:absolute;left:696px;top:964px;width:1192px;height:1px;background:#2a2a2a;"></div>
<div style="position:absolute;left:667px;top:959px;width:40px;text-align:center;font-size:8.5px;font-weight:700;color:#f0f0f0;line-height:10px;">-60</div>
<div style="position:absolute;left:530px;top:698px;width:400px;height:40px;display:flex;align-items:center;justify-content:center;font-size:11.3px;color:#fff;font-weight:700;white-space:nowrap;line-height:1;">Flowics</div>
<svg style="position:absolute;left:695px;top:729px" width="17" height="14" viewBox="0 0 17 14"><path d="M0 4 H3.5 L8 0 V14 L3.5 10 H0 Z" fill="#d0d0d0"/><path d="M10.3 4.2 Q12 7 10.3 9.8" fill="none" stroke="#d0d0d0" stroke-width="1.4"/><path d="M13.2 1.8 Q16.4 7 13.2 12.2" fill="none" stroke="#d0d0d0" stroke-width="1.4"/></svg>
<div style="position:absolute;left:527px;top:715.5px;width:400px;height:40px;display:flex;align-items:center;justify-content:center;font-size:10.5px;color:#fff;font-weight:700;white-space:nowrap;line-height:1;">ON</div>
<svg style="position:absolute;left:744px;top:727px" width="16" height="15" viewBox="0 0 16 15"><path d="M1.5 12 V8 A6.5 6.5 0 0 1 14.5 8 V12" fill="none" stroke="#e6e6e6" stroke-width="1.4"/><rect x="2.5" y="9" width="2.6" height="6" rx="1.2" fill="#f0f0f0"/><rect x="10.9" y="9" width="2.6" height="6" rx="1.2" fill="#f0f0f0"/></svg>
<div style="position:absolute;left:727px;top:748px;width:3px;height:77px;background:#232323;"></div>
<div style="position:absolute;left:731px;top:748px;width:3px;height:77px;background:#232323;"></div>
<div style="position:absolute;left:727px;top:841px;width:6px;height:29px;background:#232323;"></div>
<div style="position:absolute;left:722px;top:870px;width:16px;height:8px;background:#3c3c3c;"></div>
<div style="position:absolute;left:727px;top:878px;width:6px;height:89px;background:#c2c2c2;"></div>
<div style="position:absolute;left:530px;top:956px;width:400px;height:40px;display:flex;align-items:center;justify-content:center;font-size:10px;color:#fff;font-weight:700;white-space:nowrap;line-height:1;">0.0 dB</div>
<div style="position:absolute;left:611px;top:698px;width:400px;height:40px;display:flex;align-items:center;justify-content:center;font-size:11.3px;color:#fff;font-weight:700;white-space:nowrap;line-height:1;">Screen Share</div>
<svg style="position:absolute;left:776px;top:729px" width="17" height="14" viewBox="0 0 17 14"><path d="M0 4 H3.5 L8 0 V14 L3.5 10 H0 Z" fill="#d0d0d0"/><path d="M10.3 4.2 Q12 7 10.3 9.8" fill="none" stroke="#d0d0d0" stroke-width="1.4"/><path d="M13.2 1.8 Q16.4 7 13.2 12.2" fill="none" stroke="#d0d0d0" stroke-width="1.4"/></svg>
<div style="position:absolute;left:608px;top:715.5px;width:400px;height:40px;display:flex;align-items:center;justify-content:center;font-size:10.5px;color:#fff;font-weight:700;white-space:nowrap;line-height:1;">ON</div>
<svg style="position:absolute;left:825px;top:727px" width="16" height="15" viewBox="0 0 16 15"><path d="M1.5 12 V8 A6.5 6.5 0 0 1 14.5 8 V12" fill="none" stroke="#e6e6e6" stroke-width="1.4"/><rect x="2.5" y="9" width="2.6" height="6" rx="1.2" fill="#f0f0f0"/><rect x="10.9" y="9" width="2.6" height="6" rx="1.2" fill="#f0f0f0"/></svg>
<div style="position:absolute;left:808px;top:748px;width:3px;height:77px;background:#232323;"></div>
<div style="position:absolute;left:812px;top:748px;width:3px;height:77px;background:#232323;"></div>
<div style="position:absolute;left:808px;top:841px;width:6px;height:29px;background:#232323;"></div>
<div style="position:absolute;left:803px;top:870px;width:16px;height:8px;background:#3c3c3c;"></div>
<div style="position:absolute;left:808px;top:878px;width:6px;height:89px;background:#c2c2c2;"></div>
<div style="position:absolute;left:611px;top:956px;width:400px;height:40px;display:flex;align-items:center;justify-content:center;font-size:10px;color:#fff;font-weight:700;white-space:nowrap;line-height:1;">0.0 dB</div>
<div style="position:absolute;left:691px;top:698px;width:400px;height:40px;display:flex;align-items:center;justify-content:center;font-size:11.3px;color:#fff;font-weight:700;white-space:nowrap;line-height:1;">Singular.live</div>
<svg style="position:absolute;left:856px;top:729px" width="17" height="14" viewBox="0 0 17 14"><path d="M0 4 H3.5 L8 0 V14 L3.5 10 H0 Z" fill="#d0d0d0"/><path d="M10.3 4.2 Q12 7 10.3 9.8" fill="none" stroke="#d0d0d0" stroke-width="1.4"/><path d="M13.2 1.8 Q16.4 7 13.2 12.2" fill="none" stroke="#d0d0d0" stroke-width="1.4"/></svg>
<div style="position:absolute;left:688px;top:715.5px;width:400px;height:40px;display:flex;align-items:center;justify-content:center;font-size:10.5px;color:#fff;font-weight:700;white-space:nowrap;line-height:1;">ON</div>
<svg style="position:absolute;left:905px;top:727px" width="16" height="15" viewBox="0 0 16 15"><path d="M1.5 12 V8 A6.5 6.5 0 0 1 14.5 8 V12" fill="none" stroke="#e6e6e6" stroke-width="1.4"/><rect x="2.5" y="9" width="2.6" height="6" rx="1.2" fill="#f0f0f0"/><rect x="10.9" y="9" width="2.6" height="6" rx="1.2" fill="#f0f0f0"/></svg>
<div style="position:absolute;left:888px;top:748px;width:3px;height:77px;background:#232323;"></div>
<div style="position:absolute;left:892px;top:748px;width:3px;height:77px;background:#232323;"></div>
<div style="position:absolute;left:888px;top:841px;width:6px;height:29px;background:#232323;"></div>
<div style="position:absolute;left:883px;top:870px;width:16px;height:8px;background:#3c3c3c;"></div>
<div style="position:absolute;left:888px;top:878px;width:6px;height:89px;background:#c2c2c2;"></div>
<div style="position:absolute;left:691px;top:956px;width:400px;height:40px;display:flex;align-items:center;justify-content:center;font-size:10px;color:#fff;font-weight:700;white-space:nowrap;line-height:1;">0.0 dB</div>
<div style="position:absolute;left:775px;top:698px;width:400px;height:40px;display:flex;align-items:center;justify-content:center;font-size:11.3px;color:#fff;font-weight:700;white-space:nowrap;line-height:1;">Studio Caller 1</div>
<svg style="position:absolute;left:940px;top:729px" width="17" height="14" viewBox="0 0 17 14"><path d="M0 4 H3.5 L8 0 V14 L3.5 10 H0 Z" fill="#d0d0d0"/><path d="M10.3 4.2 Q12 7 10.3 9.8" fill="none" stroke="#d0d0d0" stroke-width="1.4"/><path d="M13.2 1.8 Q16.4 7 13.2 12.2" fill="none" stroke="#d0d0d0" stroke-width="1.4"/></svg>
<div style="position:absolute;left:772px;top:715.5px;width:400px;height:40px;display:flex;align-items:center;justify-content:center;font-size:10.5px;color:#fff;font-weight:700;white-space:nowrap;line-height:1;">ON</div>
<svg style="position:absolute;left:989px;top:727px" width="16" height="15" viewBox="0 0 16 15"><path d="M1.5 12 V8 A6.5 6.5 0 0 1 14.5 8 V12" fill="none" stroke="#e6e6e6" stroke-width="1.4"/><rect x="2.5" y="9" width="2.6" height="6" rx="1.2" fill="#f0f0f0"/><rect x="10.9" y="9" width="2.6" height="6" rx="1.2" fill="#f0f0f0"/></svg>
<div style="position:absolute;left:972px;top:748px;width:3px;height:77px;background:#232323;"></div>
<div style="position:absolute;left:976px;top:748px;width:3px;height:77px;background:#232323;"></div>
<div style="position:absolute;left:972px;top:841px;width:6px;height:60px;background:#232323;"></div>
<div style="position:absolute;left:967px;top:901px;width:16px;height:8px;background:#3c3c3c;"></div>
<div style="position:absolute;left:972px;top:909px;width:6px;height:58px;background:#c2c2c2;"></div>
<div style="position:absolute;left:775px;top:956px;width:400px;height:40px;display:flex;align-items:center;justify-content:center;font-size:10px;color:#fff;font-weight:700;white-space:nowrap;line-height:1;">-21.2 dB</div>
<div style="position:absolute;left:863px;top:698px;width:400px;height:40px;display:flex;align-items:center;justify-content:center;font-size:11.3px;color:#fff;font-weight:700;white-space:nowrap;line-height:1;">Studio Caller 2</div>
<svg style="position:absolute;left:1028px;top:729px" width="17" height="14" viewBox="0 0 17 14"><path d="M0 4 H3.5 L8 0 V14 L3.5 10 H0 Z" fill="#d0d0d0"/><path d="M10.3 4.2 Q12 7 10.3 9.8" fill="none" stroke="#d0d0d0" stroke-width="1.4"/><path d="M13.2 1.8 Q16.4 7 13.2 12.2" fill="none" stroke="#d0d0d0" stroke-width="1.4"/></svg>
<div style="position:absolute;left:860px;top:715.5px;width:400px;height:40px;display:flex;align-items:center;justify-content:center;font-size:10.5px;color:#fff;font-weight:700;white-space:nowrap;line-height:1;">ON</div>
<svg style="position:absolute;left:1077px;top:727px" width="16" height="15" viewBox="0 0 16 15"><path d="M1.5 12 V8 A6.5 6.5 0 0 1 14.5 8 V12" fill="none" stroke="#e6e6e6" stroke-width="1.4"/><rect x="2.5" y="9" width="2.6" height="6" rx="1.2" fill="#f0f0f0"/><rect x="10.9" y="9" width="2.6" height="6" rx="1.2" fill="#f0f0f0"/></svg>
<div style="position:absolute;left:1060px;top:748px;width:3px;height:77px;background:#232323;"></div>
<div style="position:absolute;left:1064px;top:748px;width:3px;height:77px;background:#232323;"></div>
<div style="position:absolute;left:1060px;top:841px;width:6px;height:29px;background:#232323;"></div>
<div style="position:absolute;left:1055px;top:870px;width:16px;height:8px;background:#3c3c3c;"></div>
<div style="position:absolute;left:1060px;top:878px;width:6px;height:89px;background:#c2c2c2;"></div>
<div style="position:absolute;left:863px;top:956px;width:400px;height:40px;display:flex;align-items:center;justify-content:center;font-size:10px;color:#fff;font-weight:700;white-space:nowrap;line-height:1;">0.0 dB</div>
<div style="position:absolute;left:1654px;top:698px;width:400px;height:40px;display:flex;align-items:center;justify-content:center;font-size:11.7px;color:#fff;font-weight:700;white-space:nowrap;line-height:1;">Program</div>
<svg style="position:absolute;left:1831px;top:729px" width="17" height="14" viewBox="0 0 17 14"><path d="M0 4 H3.5 L8 0 V14 L3.5 10 H0 Z" fill="#d0d0d0"/><path d="M10.3 4.2 Q12 7 10.3 9.8" fill="none" stroke="#d0d0d0" stroke-width="1.4"/><path d="M13.2 1.8 Q16.4 7 13.2 12.2" fill="none" stroke="#d0d0d0" stroke-width="1.4"/></svg>
<svg style="position:absolute;left:1856px;top:727px" width="16" height="15" viewBox="0 0 16 15"><path d="M1.5 12 V8 A6.5 6.5 0 0 1 14.5 8 V12" fill="none" stroke="#e6e6e6" stroke-width="1.4"/><rect x="2.5" y="9" width="2.6" height="6" rx="1.2" fill="#f0f0f0"/><rect x="10.9" y="9" width="2.6" height="6" rx="1.2" fill="#f0f0f0"/></svg>
<div style="position:absolute;left:1851px;top:748px;width:3px;height:77px;background:#232323;"></div>
<div style="position:absolute;left:1855px;top:748px;width:3px;height:77px;background:#232323;"></div>
<div style="position:absolute;left:1851px;top:841px;width:6px;height:33px;background:#232323;"></div>
<div style="position:absolute;left:1846px;top:870px;width:16px;height:8px;background:#3c3c3c;"></div>
<div style="position:absolute;left:1851px;top:878px;width:6px;height:89px;background:#c2c2c2;"></div>
<div style="position:absolute;left:1654px;top:956px;width:400px;height:40px;display:flex;align-items:center;justify-content:center;font-size:10px;color:#fff;font-weight:700;white-space:nowrap;line-height:1;">0.0 dB</div>
<div style="position:absolute;left:79px;top:1003px;font-size:13.6px;color:#fff;font-weight:700;white-space:nowrap;line-height:1;">Screen Share</div>
<div style="position:absolute;left:323px;top:995px;width:3px;height:29px;background:#111;border:1px solid #3a3a3a;border-radius:1px;"></div>
<div style="position:absolute;left:600px;top:995px;width:3px;height:29px;background:#111;border:1px solid #3a3a3a;border-radius:1px;"></div>
<div style="position:absolute;left:823px;top:995px;width:3px;height:29px;background:#111;border:1px solid #3a3a3a;border-radius:1px;"></div>
<div class="btn" style="left:332px;top:995px;width:91px;height:27px;"></div>
<div style="position:absolute;left:359px;top:1002.5px;font-size:11.5px;color:#858585;font-weight:400;white-space:nowrap;line-height:1;">Properties</div>
<div class="btn" style="left:429px;top:995px;width:90px;height:27px;"></div>
<div style="position:absolute;left:457px;top:1003px;font-size:10.5px;color:#fff;font-weight:700;white-space:nowrap;line-height:1;">Transform</div>
<div class="btn" style="left:525px;top:995px;width:69px;height:27px;"></div>
<div style="position:absolute;left:552px;top:1003.5px;font-size:10.3px;color:#fff;font-weight:700;white-space:nowrap;line-height:1;">Filters</div>
<div class="btn" style="left:609px;top:995px;width:122px;height:27px;"></div>
<div style="position:absolute;left:639px;top:1003.5px;font-size:10.4px;color:#fff;font-weight:700;white-space:nowrap;line-height:1;">RefreshBrowser</div>
<div class="btn" style="left:737px;top:995px;width:80px;height:27px;"></div>
<div style="position:absolute;left:765px;top:1003px;font-size:10.8px;color:#fff;font-weight:700;white-space:nowrap;line-height:1;">Interact</div>
<div style="position:absolute;left:61px;top:1031px;width:1860px;height:49px;background:#000;"></div>
<div style="position:absolute;left:70px;top:1051.5px;font-size:11.5px;color:#fff;font-weight:700;white-space:nowrap;line-height:1;">CPU: 0.3%, 30.00 fps</div>
<div style="position:absolute;left:216px;top:1046px;width:1px;height:19px;background:#3a3a3a;"></div>
<div style="position:absolute;left:603px;top:1049px;width:13px;height:13px;background:#fff;border-radius:50%;"></div>
<div style="position:absolute;left:618.5px;top:1052.5px;font-size:9.85px;color:#fff;font-weight:700;white-space:nowrap;line-height:1;">NDI Recorder 1</div>
<div style="position:absolute;left:698px;top:1049px;width:13px;height:13px;background:#fff;border-radius:50%;"></div>
<div style="position:absolute;left:713.5px;top:1052.5px;font-size:9.85px;color:#fff;font-weight:700;white-space:nowrap;line-height:1;">NDI Recorder 2</div>
<div style="position:absolute;left:793px;top:1049px;width:13px;height:13px;background:#fff;border-radius:50%;"></div>
<div style="position:absolute;left:808.5px;top:1052.5px;font-size:9.85px;color:#fff;font-weight:700;white-space:nowrap;line-height:1;">NDI Recorder 3</div>
<div style="position:absolute;left:888px;top:1049px;width:13px;height:13px;background:#fff;border-radius:50%;"></div>
<div style="position:absolute;left:903.5px;top:1052.5px;font-size:9.85px;color:#fff;font-weight:700;white-space:nowrap;line-height:1;">NDI Recorder 4</div>
<div style="position:absolute;left:983px;top:1049px;width:13px;height:13px;background:#fff;border-radius:50%;"></div>
<div style="position:absolute;left:998.5px;top:1052.5px;font-size:9.85px;color:#fff;font-weight:700;white-space:nowrap;line-height:1;">NDI Recorder 5</div>
<div style="position:absolute;left:1078px;top:1049px;width:13px;height:13px;background:#fff;border-radius:50%;"></div>
<div style="position:absolute;left:1093.5px;top:1052.5px;font-size:9.85px;color:#fff;font-weight:700;white-space:nowrap;line-height:1;">NDI Recorder 6</div>
<div style="position:absolute;left:1173px;top:1049px;width:13px;height:13px;background:#fff;border-radius:50%;"></div>
<div style="position:absolute;left:1188.5px;top:1052.5px;font-size:9.85px;color:#fff;font-weight:700;white-space:nowrap;line-height:1;">NDI Recorder 7</div>
<div style="position:absolute;left:1268px;top:1049px;width:13px;height:13px;background:#fff;border-radius:50%;"></div>
<div style="position:absolute;left:1283.5px;top:1052.5px;font-size:9.85px;color:#fff;font-weight:700;white-space:nowrap;line-height:1;">NDI Recorder 8</div>
<div style="position:absolute;left:1363px;top:1049px;width:13px;height:13px;background:#fff;border-radius:50%;"></div>
<div style="position:absolute;left:1378.5px;top:1052.5px;font-size:9.85px;color:#fff;font-weight:700;white-space:nowrap;line-height:1;">NDI Recorder 9</div>
<div style="position:absolute;left:1458px;top:1049px;width:13px;height:13px;background:#fff;border-radius:50%;"></div>
<div style="position:absolute;left:1473.5px;top:1052.5px;font-size:9.85px;color:#fff;font-weight:700;white-space:nowrap;line-height:1;">NDI Recorder 10</div>
<div style="position:absolute;left:1559px;top:1049px;width:13px;height:13px;background:#fff;border-radius:50%;"></div>
<div style="position:absolute;left:1575.5px;top:1050.5px;font-size:12.2px;color:#fff;font-weight:700;white-space:nowrap;line-height:1;">START PROGRAM RECORDING</div>
<svg style="position:absolute;left:1782px;top:1049px" width="12" height="13" viewBox="0 0 12 13"><path d="M0 0 L11.5 6.5 L0 13 Z" fill="#fff"/></svg>
<div style="position:absolute;left:1798px;top:1050px;font-size:11.85px;color:#fff;font-weight:700;white-space:nowrap;line-height:1;">START STREAMING</div>
<svg style="position:absolute;left:22.8px;top:782px" width="16.4" height="16.4" viewBox="6 4 39 39">
<defs><clipPath id="qc2"><polygon points="0,0 50,0 50,26.7 30.5,22.2 28,50 0,50"/></clipPath></defs>
<path clip-path="url(#qc2)" fill-rule="evenodd" fill="#f2f2f2" d="M39.29,10.01 A19.5,17 -45 1,1 11.71,37.59 A19.5,17 -45 1,1 39.29,10.01 Z M32.25,12.25 A14.5,9.5 -45 1,0 11.75,32.75 A14.5,9.5 -45 1,0 32.25,12.25 Z"/>
<path d="M29.6,10.6 Q11,11 14,34" fill="none" stroke="#8db33a" stroke-width="2.8" stroke-linecap="round"/>
<path d="M32.4,23.1 L40.7,27.8 L33.3,30.6 Z M28.7,28.2 L36.6,34.3 L28.2,35.6 Z" fill="#8db33a"/>
</svg>
<svg style="position:absolute;left:23px;top:819px" width="16" height="16" viewBox="0 0 16 16" fill="none" stroke="#e8e8e8">
<rect x="0.75" y="0.75" width="14.5" height="11" stroke-width="1.5"/><path d="M1 9.8 H15" stroke-width="1.2"/><path d="M5 15.2 H11 M6.5 12 L5.8 15 M9.5 12 L10.2 15" stroke-width="1.3"/></svg>
<svg style="position:absolute;left:23px;top:856px" width="16" height="16" viewBox="0 0 16 16" fill="none" stroke="#e8e8e8">
<rect x="0.75" y="0.75" width="14.5" height="11" stroke-width="1.5"/><path d="M1 9.8 H15" stroke-width="1.2"/><path d="M5 15.2 H11 M6.5 12 L5.8 15 M9.5 12 L10.2 15" stroke-width="1.3"/>
<circle cx="7.3" cy="4.8" r="2" stroke-width="1.1"/><path d="M8.8 6.3 L10.5 8" stroke-width="1.2"/></svg>
<svg style="position:absolute;left:23px;top:893px" width="16" height="16" viewBox="0 0 16 16" fill="#f2f2f2">
<rect x="0" y="0" width="7" height="7"/><rect x="9" y="0" width="7" height="7"/><rect x="0" y="9" width="7" height="7"/><rect x="9" y="9" width="7" height="7"/></svg>
<svg style="position:absolute;left:23px;top:930px" width="16" height="16" viewBox="0 0 16 16"><path fill="#f2f2f2" fill-rule="evenodd" d="M15.81,6.25 L15.81,9.75 L13.66,10.53 L13.79,10.22 L14.76,12.29 L12.29,14.76 L10.22,13.79 L10.53,13.66 L9.75,15.81 L6.25,15.81 L5.47,13.66 L5.78,13.79 L3.71,14.76 L1.24,12.29 L2.21,10.22 L2.34,10.53 L0.19,9.75 L0.19,6.25 L2.34,5.47 L2.21,5.78 L1.24,3.71 L3.71,1.24 L5.78,2.21 L5.47,2.34 L6.25,0.19 L9.75,0.19 L10.53,2.34 L10.22,2.21 L12.29,1.24 L14.76,3.71 L13.79,5.78 L13.66,5.47 Z M8,5.4 A2.6,2.6 0 1,0 8.001,5.4 Z"/></svg>
<svg style="position:absolute;left:23px;top:967px" width="17" height="17" viewBox="0 0 17 17">
<path d="M3 1 H8 L10 3 H16 V14" fill="none" stroke="#cfcfcf" stroke-width="1.2"/><path d="M2 2.5 H7 L9 4.5 H14.5 V15" fill="none" stroke="#e0e0e0" stroke-width="1.2"/>
<path d="M0 4 H6 L8 6 H14 V16 H0 Z" fill="#f2f2f2"/></svg>
<svg style="position:absolute;left:23px;top:1004px" width="17" height="17" viewBox="0 0 17 17">
<path d="M1.1,10.5 L5.6,15.6 L16,5.6 L11.4,0.4 Z" fill="#fff"/>
<path d="M3.6,6.6 L5,8.6 M8.3,2.9 L9.6,4.6" stroke="#2b2b2b" stroke-width="1.2"/>
<path d="M1.4,3.3 L5,0.1 L6.9,2.3 L3.3,5.3 Z" fill="#fff"/>
<path d="M10.2,13.7 L14,10.5 L15.7,12.7 L15.4,16 L11.4,15.6 Z" fill="#fff"/></svg>
<svg style="position:absolute;left:23px;top:1042px" width="16" height="14" viewBox="0 0 16 14">
<path d="M6 1 H2 Q1 1 1 2 V12 Q1 13 2 13 H6" fill="none" stroke="#e8e8e8" stroke-width="1.5"/>
<path d="M4.5 5 H9 V1.5 L15.5 7 L9 12.5 V9 H4.5 Z" fill="#f2f2f2"/></svg>
<svg style="position:absolute;left:101px;top:735px" width="16" height="16" viewBox="6 4 39 39">
<defs><clipPath id="qc3"><polygon points="0,0 50,0 50,26.7 30.5,22.2 28,50 0,50"/></clipPath></defs>
<path clip-path="url(#qc3)" fill-rule="evenodd" fill="#fff" d="M39.29,10.01 A19.5,17 -45 1,1 11.71,37.59 A19.5,17 -45 1,1 39.29,10.01 Z M32.25,12.25 A14.5,9.5 -45 1,0 11.75,32.75 A14.5,9.5 -45 1,0 32.25,12.25 Z"/>
<path d="M29.6,10.6 Q11,11 14,34" fill="none" stroke="#a3bd3a" stroke-width="2.8" stroke-linecap="round"/>
<path d="M32.4,23.1 L40.7,27.8 L33.3,30.6 Z M28.7,28.2 L36.6,34.3 L28.2,35.6 Z" fill="#a3bd3a"/>
</svg>
<svg style="position:absolute;left:265px;top:737px" width="16" height="10" viewBox="0 0 16 10">
<path d="M0 5 Q8 -3 16 5 Q8 13 0 5 Z" fill="#d8d8d8"/><circle cx="8" cy="5" r="3.2" fill="#7f8a30"/><circle cx="8" cy="5" r="1.7" fill="#d8d8d8"/></svg>
<svg style="position:absolute;left:290px;top:734px" width="13" height="15" viewBox="0 0 13 15">
<path d="M3.2 6 V4 A3.3 3.3 0 0 1 9.8 4 V6.5" fill="none" stroke="#d8d8d8" stroke-width="1.6"/>
<rect x="0" y="6.5" width="12.5" height="8.5" fill="#d8d8d8"/><rect x="0" y="4.5" width="4.5" height="2" fill="#7f8a30"/></svg>
<svg style="position:absolute;left:572px;top:712px" width="14" height="14" viewBox="0 0 16 16"><path fill="#ffffff" fill-rule="evenodd" d="M15.81,6.25 L15.81,9.75 L13.66,10.53 L13.79,10.22 L14.76,12.29 L12.29,14.76 L10.22,13.79 L10.53,13.66 L9.75,15.81 L6.25,15.81 L5.47,13.66 L5.78,13.79 L3.71,14.76 L1.24,12.29 L2.21,10.22 L2.34,10.53 L0.19,9.75 L0.19,6.25 L2.34,5.47 L2.21,5.78 L1.24,3.71 L3.71,1.24 L5.78,2.21 L5.47,2.34 L6.25,0.19 L9.75,0.19 L10.53,2.34 L10.22,2.21 L12.29,1.24 L14.76,3.71 L13.79,5.78 L13.66,5.47 Z M8,5.4 A2.6,2.6 0 1,0 8.001,5.4 Z"/></svg>
<svg style="position:absolute;left:599px;top:711px" width="13" height="15" viewBox="0 0 13 15">
<path d="M3.2 6 V4 A3.3 3.3 0 0 1 9.8 4 V6.5" fill="none" stroke="#d0d0d0" stroke-width="1.6"/>
<rect x="0" y="6.5" width="12.5" height="8.5" fill="#d0d0d0"/><rect x="0" y="4.5" width="4.5" height="2" fill="#000"/></svg>
<svg style="position:absolute;left:341px;top:999px" width="17" height="17" viewBox="0 0 16 16"><path fill="#505050" fill-rule="evenodd" d="M15.81,6.25 L15.81,9.75 L13.66,10.53 L13.79,10.22 L14.76,12.29 L12.29,14.76 L10.22,13.79 L10.53,13.66 L9.75,15.81 L6.25,15.81 L5.47,13.66 L5.78,13.79 L3.71,14.76 L1.24,12.29 L2.21,10.22 L2.34,10.53 L0.19,9.75 L0.19,6.25 L2.34,5.47 L2.21,5.78 L1.24,3.71 L3.71,1.24 L5.78,2.21 L5.47,2.34 L6.25,0.19 L9.75,0.19 L10.53,2.34 L10.22,2.21 L12.29,1.24 L14.76,3.71 L13.79,5.78 L13.66,5.47 Z M8,5.4 A2.6,2.6 0 1,0 8.001,5.4 Z"/></svg>
<svg style="position:absolute;left:438px;top:999px" width="16" height="16" viewBox="0 0 17 17">
<rect x="1.5" y="1.5" width="14" height="14" fill="none" stroke="#fff" stroke-width="1.3"/>
<g fill="#fff"><rect x="0" y="0" width="3.2" height="3.2"/><rect x="13.8" y="0" width="3.2" height="3.2"/><rect x="0" y="13.8" width="3.2" height="3.2"/><rect x="13.8" y="13.8" width="3.2" height="3.2"/>
<circle cx="8.5" cy="1.5" r="1.5"/><circle cx="8.5" cy="15.5" r="1.5"/><circle cx="1.5" cy="8.5" r="1.5"/><circle cx="15.5" cy="8.5" r="1.5"/><rect x="8" y="8" width="1" height="1" fill="#888"/></g></svg>
<svg style="position:absolute;left:533px;top:998px" width="16" height="17" viewBox="0 0 16 17">
<path d="M5 6 L7 4 L15.5 12.5 L13.5 14.5 Z" fill="#fff"/><path d="M5.5 6.5 L7 5 L8 6 L6.5 7.5 Z" fill="#333"/>
<path d="M7 0 V2.3 M1 5 H3.2 M2.5 1.5 L4 3 M10.5 1.5 L9 3" stroke="#ddd" stroke-width="1"/></svg>
<svg style="position:absolute;left:618px;top:999px" width="16.5" height="16.5" viewBox="0 0 16.5 16.5">
<path d="M2.2,7.2 A6,6 0 0 1 12.4,3.9" fill="none" stroke="#fff" stroke-width="3"/><path d="M15.6,1.2 V7.6 H9.2 Z" fill="#fff"/>
<path d="M14.3,9.3 A6,6 0 0 1 4.1,12.6" fill="none" stroke="#fff" stroke-width="3"/><path d="M0.9,15.3 V8.9 H7.3 Z" fill="#fff"/></svg>
<svg style="position:absolute;left:747px;top:999px" width="13" height="16" viewBox="0 0 13 16" fill="#fff">
<path d="M0.5,3 H7.5 V0.3 L12.7,4.5 L7.5,8.7 V6 H0.5 Z"/><path d="M12.5,10 H5.5 V7.3 L0.3,11.5 L5.5,15.7 V13 H12.5 Z"/></svg>
<div style="position:absolute;left:0px;top:0px;width:1921px;height:1080px;border:1px solid #000;"></div>
</body></html>
